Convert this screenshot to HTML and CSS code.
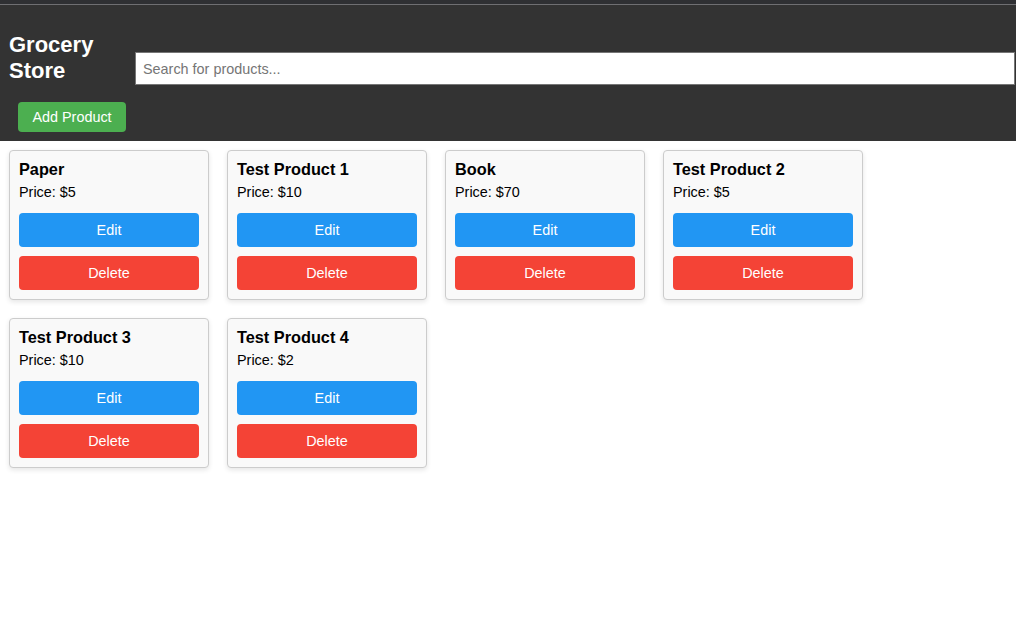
FILE: index.html
```html
<!DOCTYPE html>
<html lang="en">
<head>
<meta charset="UTF-8">
<title>Grocery Store</title>
<link rel="stylesheet" href="styles.css">
</head>
<body>
<header class="header">
  <div class="topline"></div>
  <div class="header-row">
    <h1 class="title">Grocery Store</h1>
    <input class="search" type="text" placeholder="Search for products...">
  </div>
  <div class="actions">
    <button class="btn btn-add">Add Product</button>
  </div>
</header>
<main class="grid">
  <div class="card">
    <h3 class="card-title">Paper</h3>
    <p class="price">Price: $5</p>
    <button class="btn btn-edit">Edit</button>
    <button class="btn btn-delete">Delete</button>
  </div>
  <div class="card">
    <h3 class="card-title">Test Product 1</h3>
    <p class="price">Price: $10</p>
    <button class="btn btn-edit">Edit</button>
    <button class="btn btn-delete">Delete</button>
  </div>
  <div class="card">
    <h3 class="card-title">Book</h3>
    <p class="price">Price: $70</p>
    <button class="btn btn-edit">Edit</button>
    <button class="btn btn-delete">Delete</button>
  </div>
  <div class="card">
    <h3 class="card-title">Test Product 2</h3>
    <p class="price">Price: $5</p>
    <button class="btn btn-edit">Edit</button>
    <button class="btn btn-delete">Delete</button>
  </div>
  <div class="card">
    <h3 class="card-title">Test Product 3</h3>
    <p class="price">Price: $10</p>
    <button class="btn btn-edit">Edit</button>
    <button class="btn btn-delete">Delete</button>
  </div>
  <div class="card">
    <h3 class="card-title">Test Product 4</h3>
    <p class="price">Price: $2</p>
    <button class="btn btn-edit">Edit</button>
    <button class="btn btn-delete">Delete</button>
  </div>
</main>
</body>
</html>
```
FILE: styles.css
```css
* { box-sizing: border-box; }
html, body {
  margin: 0;
  padding: 0;
  background: #fff;
  font-family: "Liberation Sans", Arial, sans-serif;
}
.header {
  background: #333;
  color: #fff;
}
.topline {
  height: 5px;
  background: #2f3033;
  border-bottom: 1px solid #6f6f72;
}
.header-row {
  display: flex;
  align-items: flex-start;
  padding: 0 1px 0 9px;
}
.title {
  flex: none;
  width: 110px;
  margin: 27px 0 0;
  font-size: 22px;
  line-height: 26px;
  font-weight: bold;
}
.search {
  flex: 1;
  min-width: 0;
  height: 33px;
  margin: 47px 0 0 16px;
  padding: 0 7px;
  border: 1px solid #767676;
  font-family: "Liberation Sans", Arial, sans-serif;
  font-size: 14.4px;
  color: #333;
  background: #fff;
  outline: none;
}
.search::placeholder { color: #757575; }
.actions {
  padding: 17px 0 9px 18px;
}
.btn {
  display: block;
  border: none;
  border-radius: 4px;
  color: #fff;
  font-family: "Liberation Sans", Arial, sans-serif;
  font-size: 14.4px;
  cursor: pointer;
}
.btn-add {
  width: 108px;
  height: 30px;
  background: #4caf50;
}
.grid {
  display: flex;
  flex-wrap: wrap;
  gap: 18px;
  padding: 9px;
  width: 890px;
}
.card {
  width: 200px;
  padding: 9px 9px 9px;
  background: #f9f9f9;
  border: 1px solid #ccc;
  border-radius: 4px;
  box-shadow: 0 2px 5px rgba(0, 0, 0, 0.1);
}
.card-title {
  margin: 0 0 6px;
  font-size: 16.3px;
  line-height: 18px;
  font-weight: bold;
  color: #000;
}
.price {
  margin: 0 0 12px;
  font-size: 14.4px;
  line-height: 17px;
  color: #000;
}
.btn-edit, .btn-delete {
  width: 100%;
  height: 34px;
}
.btn-edit { background: #2196f3; margin-bottom: 9px; }
.btn-delete { background: #f44336; }
```
